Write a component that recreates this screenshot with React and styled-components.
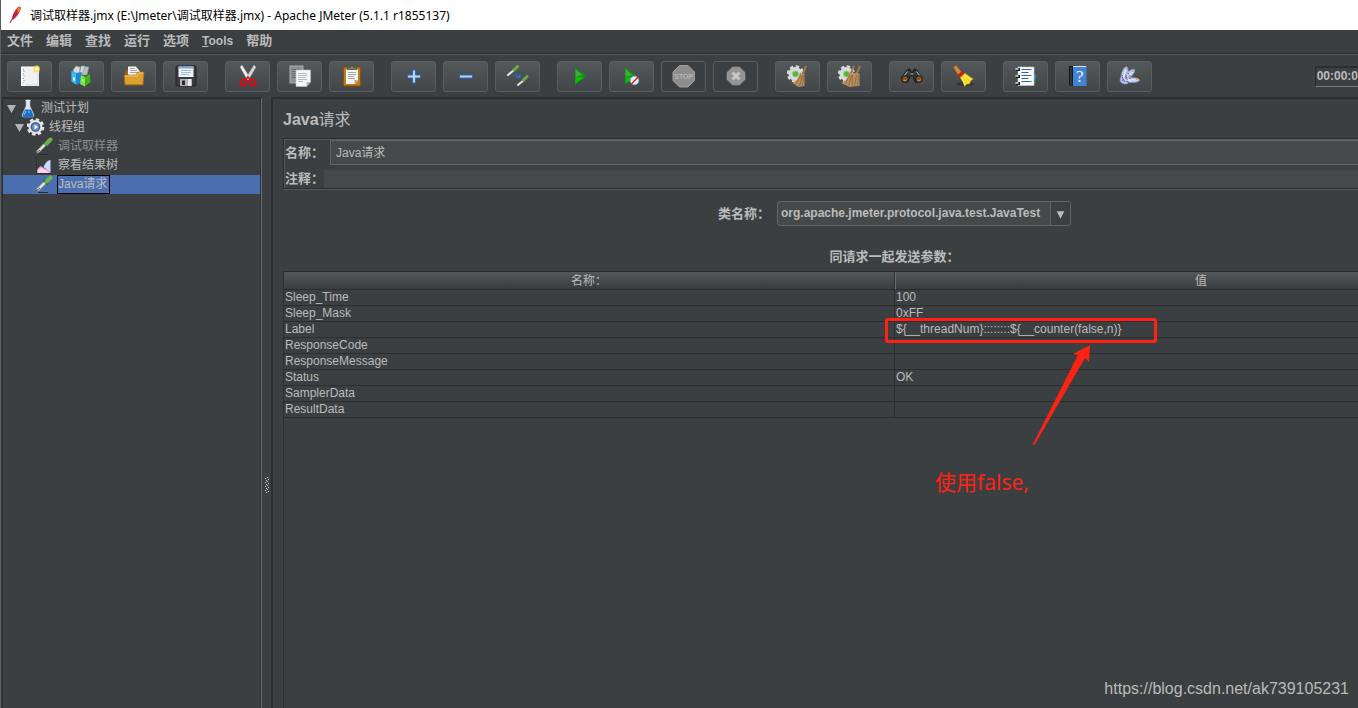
import React from 'react'
import styled, { createGlobalStyle, css } from 'styled-components'

const GlobalStyle = createGlobalStyle`
  * {
    box-sizing: border-box;
  }
  body {
    margin: 0;
    overflow: hidden;
    background: #3c3f41;
  }
  button, input, select {
    font: inherit;
    color: inherit;
    margin: 0;
  }
`

const Window = styled.div`
  position: relative;
  display: flex;
  flex-direction: column;
  height: 100vh;
  overflow: hidden;
  border-left: 1px solid #5a5d5f;
  background: #3c3f41;
  color: #bbbbbb;
  font-family: 'Liberation Sans', 'Noto Sans CJK SC', sans-serif;
  font-size: 12px;
`
const TitleBar = styled.header`
  display: flex;
  align-items: center;
  gap: 7px;
  height: 30px;
  flex: none;
  padding-left: 7px;
  background: #ffffff;
  color: #000000;
  font-family: 'Noto Sans', 'Noto Sans CJK SC', sans-serif;
  white-space: nowrap;
`
const MenuBar = styled.nav`
  display: flex;
  align-items: center;
  gap: 13px;
  height: 24px;
  flex: none;
  padding: 0 6px 1px;
  border-bottom: 1px solid #2b2d2f;
`
const MenuItem = styled.button`
  padding: 0;
  border: 0;
  background: none;
  font-size: ${p => p.$latin ? '12px' : '13px'};
  line-height: 20px;
  font-weight: bold;
`
const ToolBar = styled.div`
  display: flex;
  align-items: center;
  gap: 17px;
  height: 43px;
  flex: none;
  padding-left: 6px;
  border-top: 1px solid #555859;
`
const ToolGroup = styled.div`
  display: flex;
  gap: 7px;
`
const ToolButton = styled.button`
  display: flex;
  align-items: center;
  justify-content: center;
  width: 45px;
  height: 31px;
  padding: 0;
  border: 1px solid #5a5e60;
  border-radius: 3px;
  background: linear-gradient(#53585a, #424648);
  &:disabled {
    background: none;
  }
`
const Timer = styled.output`
  margin-left: auto;
  height: 21px;
  padding: 0 0 0 1px;
  border-style: solid;
  border-width: 2px 0 1px 1px;
  border-color: #2b2d2f #2b2d2f #7a7e80;
  font-weight: bold;
  line-height: 17px;
`
const Body = styled.div`
  display: flex;
  flex: 1;
  min-height: 0;
  padding-left: 1px;
`
const Tree = styled.aside`
  flex: none;
  width: 260px;
  border-top: 2px solid #2b2d2f;
  border-left: 1px solid #2b2d2f;
  border-right: 1px solid #6b6e70;
  box-shadow: inset -1px 0 0 #2b2d2f;
  padding-right: 1px;
`
const TreeRow = styled.div`
  display: flex;
  align-items: center;
  gap: 3px;
  height: 19px;
  padding-left: ${p => p.$indent}px;
  color: ${p => p.$dim ? '#8c8e8f' : '#bbbbbb'};
  background: ${p => p.$selected ? '#4b6eaf' : 'none'};
  white-space: nowrap;
  span {
    padding: 0 2px 0 0;
    border: 1px solid ${p => p.$selected ? '#000000' : 'transparent'};
    line-height: 17px;
  }
`
const NodeText = styled.span`
  height: 19px;
`
const Toggle = styled.svg`
  width: 9px;
  height: 8px;
`
const Splitter = styled.div`
  flex: none;
  width: 9px;
  padding: 380px 0 0 2px;
`
const Main = styled.main`
  display: flex;
  flex-direction: column;
  flex: 1;
  min-width: 0;
  overflow: hidden;
  padding: 9px 0 0 10px;
  border-top: 2px solid #2b2d2f;
  border-left: 2px solid #2b2d2f;
`
// the scrolled pane is wider than the part of it that shows
const Pane = styled.div`
  display: flex;
  flex-direction: column;
  flex: 1;
  width: calc(100% + 148px);
`
const Heading = styled.h1`
  margin: 0 0 6px;
  font-size: 16px;
  line-height: 24px;
  font-weight: normal;
  b {
    font-weight: bold;
  }
`
const Fields = styled.div`
  display: flex;
  flex-direction: column;
  gap: 5px;
  padding: 1px 0 0 1px;
  border: 1px solid #2b2d2f;
  box-shadow: 1px 1px 0 #555859, inset 1px 1px 0 #555859;
`
const Field = styled.div`
  display: flex;
  align-items: center;
`
const Label = styled.label`
  font-size: 13px;
  line-height: 18px;
  font-weight: bold;
`
const TextInput = styled.input`
  flex: 1;
  min-width: 0;
  outline: 0;
  background: #45494a;
  ${p => p.$plain ? css`
    height: 18px;
    border: 0;
  ` : css`
    height: 25px;
    margin-left: 6px;
    padding: 0 5px 3px;
    border: 1px solid #646464;
  `}
`
const ClassRow = styled.div`
  display: flex;
  align-items: center;
  justify-content: center;
  gap: 7px;
  margin-top: 12px;
`
const Combo = styled.div`
  display: flex;
  width: 294px;
  height: 25px;
  border: 1px solid #646464;
  border-radius: 3px;
  background: #45494a;
  overflow: hidden;
  svg {
    flex: none;
    width: 20px;
    height: 23px;
    border-left: 1px solid #646464;
    background: #3c3f41;
  }
`
const Select = styled.select`
  flex: 1;
  min-width: 0;
  padding: 0 0 1px 3px;
  border: 0;
  outline: 0;
  appearance: none;
  background: none;
  font-weight: bold;
`
const TableTitle = styled.h2`
  margin: 21px 0 4px;
  font-size: 13px;
  line-height: 20px;
  text-align: center;
`
const TableBox = styled.div`
  flex: 1;
  border-top: 1px solid #2b2d2f;
  border-left: 1px solid #2b2d2f;
`
const Table = styled.table`
  width: 100%;
  table-layout: fixed;
  border-spacing: 0;
  th, td {
    height: 16px;
    padding: 0 1px;
    border-bottom: 1px solid #2b2d2f;
    line-height: 15px;
    text-align: left;
    white-space: nowrap;
  }
  th {
    height: 18px;
    padding-top: 2px;
    background: linear-gradient(#53585a, #393c3e);
    font-weight: normal;
    text-align: center;
  }
  th:first-child, td:first-child {
    border-right: 1px solid #2b2d2f;
  }
  th + th {
    border-left: 1px solid #6b6e70;
  }
`
const ValueCell = styled.td`
  position: relative;
  z-index: ${p => p.$marked ? 1 : 0};
`
const Mark = styled.div`
  position: absolute;
  left: -10px;
  top: -4px;
  width: 272px;
  height: 25px;
  border: 3px solid #ff2213;
  border-radius: 3px;
`
const Arrow = styled.svg`
  position: absolute;
  left: 136px;
  top: 22px;
  width: 62px;
  height: 104px;
`
const Note = styled.div`
  position: absolute;
  left: 40px;
  top: 145px;
  color: #ff2213;
  font-family: 'Noto Sans', 'Noto Sans CJK SC', sans-serif;
  font-size: 21px;
  line-height: 30px;
`
const Watermark = styled.div`
  position: absolute;
  right: 9px;
  bottom: 9px;
  color: #b9bbbb;
  font-size: 16px;
  line-height: 20px;
`

const icons = {
  new: <>
    <rect x="3.5" y="2" width="17" height="18.5" fill="#f1f1f1" stroke="#fff" />
    <path d="M5.5 4v14M5.5 6.5h1M5.5 11h1M5.5 15.5h1" stroke="#999" strokeDasharray="1 3.5" />
    <path d="M8 20h12V8" fill="none" stroke="#d4d4d4" />
    <circle cx="18.5" cy="4" r="3.4" fill="#f2df52" opacity=".8" />
    <circle cx="18.5" cy="4" r="1.5" fill="#fffbd0" />
  </>,
  templates: <>
    <path d="M3 5l3-4 4 1v7l-6 1zM11 1h4l-1 8h-5z" fill="#d6dadc" stroke="#858b8e" strokeWidth=".6" />
    <path d="M15 1.500l4 .5-2 8h-5z" fill="#b9bec1" stroke="#858b8e" strokeWidth=".6" />
    <path d="M1.500 6l5 2 5-1v11l-5 1.500-5-3z" fill="#1c87d6" />
    <path d="M1.500 6l4.500 2v11.500l-4.500-3z" fill="#40bbf2" />
    <path d="M11 10l4 2 5-3 .5 8-6 4.500-4-2.500z" fill="#40b518" />
    <path d="M11 10l4 2v9.500l-5-2.500z" fill="#7be24a" />
    <path d="M3 12l2 1v3l-2-1zM12 14l1.500 1v2l-1.500-1z" fill="#e9fbff" />
  </>,
  open: <>
    <path d="M3 7l2-2h5l1 2 10-1v12H3z" fill="#9a6509" />
    <path d="M6 1.500h8l4 5V14H6z" fill="#f7f7f7" />
    <path d="M8 3.500h5M8 5.500h7M8 7.500h8" stroke="#a4a4a4" />
    <path d="M2 10h12l2-3h6l-1 13H3z" fill="#dba02f" stroke="#a26b0b" strokeWidth=".7" />
    <path d="M3 11h12l1.500-3H21" fill="none" stroke="#f3c874" />
    <path d="M3 19.500h18" stroke="#b57a12" />
  </>,
  save: <>
    <rect x="2" y="1" width="20" height="20" rx="1.500" fill="#3b3b3e" stroke="#202022" />
    <rect x="4.500" y="1.500" width="15" height="10.500" fill="#eef3f9" />
    <rect x="4.500" y="1.500" width="15" height="2" fill="#7ca5d7" />
    <path d="M7 5.500h10M7 7.500h10M7 9.500h8" stroke="#9ebbd9" />
    <rect x="6" y="14" width="12" height="7" fill="#b2b4b5" />
    <rect x="8" y="15.500" width="3" height="4.500" fill="#28292b" />
    <path d="M15.500 14v7" stroke="#e9e9e9" strokeWidth="3" />
  </>,
  cut: <>
    <path d="M4 2l2-2L13.500 12l-2 3z" fill="#f2f2f2" stroke="#999" strokeWidth=".5" />
    <path d="M20 2l-2-2L10.500 12l2 3z" fill="#d8dadb" stroke="#999" strokeWidth=".5" />
    <ellipse cx="7.500" cy="17.500" rx="2.700" ry="3.400" transform="rotate(32 7.500 17.500)" fill="none" stroke="#d70d13" strokeWidth="2.200" />
    <ellipse cx="16.500" cy="17.500" rx="2.700" ry="3.400" transform="rotate(-32 16.500 17.500)" fill="none" stroke="#d70d13" strokeWidth="2.200" />
    <path d="M10 14l2-2 2 2" fill="none" stroke="#d70d13" strokeWidth="1.500" />
  </>,
  copy: <>
    <rect x="2" y="1" width="13" height="17" fill="#8d9091" stroke="#a8abac" />
    <path d="M4 4.500h8M4 6.500h8M4 8.500h8M4 10.500h4M4 12.500h4" stroke="#686b6d" />
    <path d="M8 5h14.500v12l-4 4.500H8z" fill="#f4f4f4" stroke="#c2c2c2" strokeWidth=".6" />
    <path d="M10 8.500h9M10 10.500h9M10 12.500h8M10 14.500h9M10 16.500h5" stroke="#a9abad" strokeWidth=".8" />
    <path d="M22.500 17h-4v4.500z" fill="#b5b8ba" />
  </>,
  paste: <>
    <rect x="3.500" y="2" width="17" height="19" rx="1" fill="#c17a19" stroke="#88500a" />
    <path d="M6 4.500h12v11L15 19H6z" fill="#f5f5f5" />
    <path d="M8 7.500h8M8 9.500h8M8 11.500h6M8 13.500h7" stroke="#a8a8a8" />
    <path d="M18 15h-3.500v4z" fill="#a8a8a8" />
    <path d="M7.500 4.500V2.500h2.500L11 .5h2l1 2h2.500v2z" fill="#777b70" stroke="#3f423c" strokeWidth=".6" />
  </>,
  plus: <path d="M10.500 5h3v5h5v3h-5v5h-3v-5h-5v-3h5z" fill="#b7d2f3" stroke="#2f69b5" />,
  minus: <rect x="5.500" y="10" width="13" height="3" fill="#b7d2f3" stroke="#2f69b5" />,
  toggle: <>
    <path d="M2 10l6.500-5.500" stroke="#eceeea" strokeWidth="2" strokeLinecap="round" />
    <path d="M8 5l3.500-3.500" stroke="#6da84b" strokeWidth="3" strokeLinecap="round" />
    <path d="M12 20l6-5" stroke="#e1e4de" strokeWidth="2" strokeLinecap="round" />
    <path d="M17.500 15l3.500-3.500" stroke="#6da84b" strokeWidth="3" strokeLinecap="round" />
    <path d="M8.500 8l3 3" stroke="#1873ee" strokeWidth="1.500" strokeDasharray="1.500 1" />
    <path d="M14.500 8.500v4.500H10z" fill="#1873ee" />
  </>,
  play: <>
    <path d="M7 2l12 9L7 20z" fill="#17891a" />
    <path d="M7.500 4l7 6-7 2z" fill="#55b64a" opacity=".7" />
    <path d="M7.500 12.500L16 12l-8.500 6.500z" fill="#04c404" />
  </>,
  playNoTimers: <>
    <path d="M5 2l12 9L5 20z" fill="#17891a" />
    <path d="M5.500 4l7 6-7 2z" fill="#55b64a" opacity=".7" />
    <path d="M5.500 12.500L13 12l-7.500 6.500z" fill="#04c404" />
    <circle cx="14.500" cy="15.500" r="4.300" fill="#e7f0f8" stroke="#7aa8d3" />
    <path d="M11 19.500l7.500-8" stroke="#e21616" strokeWidth="1.300" />
  </>,
  stop: <>
    <path d="M7.500.5h8.500l6.500 6.500v8.500L16 22H7.500L1 15.500V7z" fill="#8d8d8d" stroke="#a0a0a0" />
    <text x="11.700" y="14" textAnchor="middle" fontSize="7" fontWeight="bold" fill="#b5b5b5">STOP</text>
  </>,
  shutdown: <>
    <path d="M8.500 2h7L21 7.500v7L15.500 20h-7L3 14.500v-7z" fill="#949494" stroke="#a0a0a0" strokeWidth=".5" />
    <path d="M8.500 7.500l7 7M15.500 7.500l-7 7" stroke="#c9c9c9" strokeWidth="2.800" />
  </>,
  clear: <>
    <circle cx="9.500" cy="9" r="7" fill="#d9dbda" />
    <circle cx="9.500" cy="9" r="7.500" fill="none" stroke="#d9dbda" strokeWidth="2.400" strokeDasharray="3.400 2.490" />
    <circle cx="9.500" cy="9" r="3" fill="#52b927" stroke="#a5bb9d" />
    <path d="M19 .5l2 .5-3 8-2-1z" fill="#a07544" />
    <path d="M14 7.500l4.500 1.500v12l-6 1-6-4c4-2 6-5 7.500-10.500z" fill="#b98f62" />
    <path d="M15 10l-5 9M16.500 10l-3 11M17.500 10l-1 11" stroke="#886036" strokeWidth=".7" />
  </>,
  clearAll: <>
    <circle cx="8.500" cy="9" r="7" fill="#d9dbda" />
    <circle cx="8.500" cy="9" r="7.500" fill="none" stroke="#d9dbda" strokeWidth="2.400" strokeDasharray="3.400 2.490" />
    <circle cx="8.500" cy="9" r="3" fill="#52b927" stroke="#a5bb9d" />
    <path d="M15 .5l2 .5-3 8-2-1zM21 .5l2 .5-3 8-2-1z" fill="#a07544" />
    <path d="M11 7.500l4 1.500 3-1.500 3.500 1.500v12l-6 .5-4 .5-8.500-4c5-2 7-5 8-10.500z" fill="#b98f62" />
    <path d="M11.500 10l-4 9M13.500 10l-3 11M14.500 10l-.5 11M18.500 10l-2 11M20.500 10l-1 11" stroke="#886036" strokeWidth=".7" />
  </>,
  search: <>
    <path d="M7 5l3-1 1 3h2l1-3 3 1 5 8-3 4h-4l-2-6h-3l-2 6H4l-3-4z" fill="#33383a" stroke="#16191a" />
    <path d="M7.500 6.500l-4 5M16.500 6.500l4 5M10.500 9h3" stroke="#aab2b5" strokeWidth="1.200" />
    <circle cx="5" cy="14" r="3.300" fill="#935218" stroke="#17191a" />
    <circle cx="19" cy="14" r="3.300" fill="#935218" stroke="#17191a" />
    <path d="M3.500 15.500q1.500 1 3-.5M17.500 15.500q1.500 1 3-.5" fill="none" stroke="#e38b3e" />
  </>,
  broom: <>
    <ellipse cx="13" cy="19" rx="9" ry="2" fill="#34373a" />
    <path d="M1.500 3q0-3 3-2.500L9.500 7 6 10z" fill="#c98b43" stroke="#80501b" strokeWidth=".6" />
    <path d="M5.500 10.500L10 6l3 2.500L8 13z" fill="#c71c18" />
    <path d="M8 12.500l5-4.500q5 4 8.500 6-3 1-4 5-2-1-5 2.500Q11 16 8 12.500z" fill="#f1d61e" stroke="#b18b0a" strokeWidth=".6" />
    <path d="M10 13l3 7M12 11l5 7.500M13 10l6 5" stroke="#fff47c" />
  </>,
  functions: <>
    <path d="M18 9h4v5h-4z" fill="#2e77ca" />
    <path d="M18 14h4v5h-4z" fill="#18852a" />
    <path d="M4 2h16v18.500H4z" fill="#fafafa" stroke="#c8c8c8" strokeWidth=".6" />
    <path d="M7.500 4.500h10M7.500 7.500h7M7.500 10.500h10M7.500 13.500h7M7.500 16.500h10" stroke="#2e68b7" />
    <path d="M2 4.500h4M2 11.500h4M2 18.500h4" stroke="#131313" strokeWidth="3" />
    <path d="M1.500 4h3M1.500 11h3M1.500 18h3" stroke="#efefef" strokeWidth="1.500" />
  </>,
  help: <>
    <path d="M3.500 1h17v20h-17z" fill="#4183d7" />
    <path d="M3.500 1.500H20" stroke="#dce5ee" />
    <path d="M3 1h4v20l-4-.5z" fill="#161719" />
    <path d="M5 2v18" stroke="#4b4e53" />
    <text x="13.700" y="17" textAnchor="middle" fontFamily="Liberation Serif" fontSize="17" fill="#f4f8ff">?</text>
  </>,
  feather: <>
    <g fill="#b4c7ea" stroke="#86a2d6" strokeWidth=".6">
      <ellipse cx="6.500" cy="9" rx="3" ry="7.500" transform="rotate(16 6.500 9)" />
      <ellipse cx="10.500" cy="10" rx="2.800" ry="8" transform="rotate(48 10.500 10)" />
      <ellipse cx="13" cy="15" rx="2.600" ry="8.500" transform="rotate(91 13 15)" />
      <ellipse cx="7" cy="15" rx="5" ry="4" />
    </g>
    <path d="M5 14l3-10M6 14l9-7M8 15h11M5 10l2 1M9 14l4 3" stroke="#eff5fb" />
    <path d="M4 10l2 7M8 10l2 8M10 8l2 4M4 15l9 3" stroke="#4459ab" strokeDasharray="1 1" />
    <path d="M8.500 2.500v2M15.500 5.500l-1 1M18 13.500l2 1" stroke="#e8994e" strokeWidth="1.500" />
    <path d="M8 11v3M12 13v1M5 13v1" stroke="#c53553" />
  </>,
}

const nodeIcons = {
  plan: <>
    <path d="M7 1h4v6l4 9q0 2-1.500 2h-9Q3 18 3 16l4-9z" fill="#dce8f2" stroke="#a8b7c3" strokeWidth=".6" />
    <path d="M6 10.500h6l2.500 6-1 1.500H4.500l-1-1.500z" fill="#1c6fd0" />
    <path d="M7 12l-2 4M9 13h2" stroke="#8cc4fa" />
    <path d="M6.500 1.500h5" stroke="#fff" />
  </>,
  gear: <>
    <circle cx="8.500" cy="9" r="7" fill="#e2e4e5" />
    <circle cx="8.500" cy="9" r="7.500" fill="none" stroke="#e2e4e5" strokeWidth="2.600" strokeDasharray="3.400 2.490" />
    <circle cx="8.500" cy="9" r="4.200" fill="#638fd0" stroke="#405983" strokeWidth="1.300" />
    <path d="M7.500 6.500l3.500 2.500-3.500 2.500z" fill="#fff" />
  </>,
  pipette: <>
    <path d="M2 17.500h10" stroke="#2a2c2e" />
    <path d="M0 16l1-2.500 7-7 2 2-7 7z" fill="#e3e6e1" stroke="#858985" strokeWidth=".7" />
    <path d="M0 16l4-3" stroke="#555" />
    <path d="M7.500 5l4.500 4.500" stroke="#2f5c21" strokeWidth="1.800" />
    <path d="M10.500 6.500L14.500 2.500" stroke="#67b348" strokeWidth="4" strokeLinecap="round" />
  </>,
  results: <>
    <path d="M.5 1v16.500H16" fill="none" stroke="#202224" strokeDasharray="1 1" />
    <path d="M1.500 17v-4l3-3 5 3 5 1v3z" fill="#efa4d8" />
    <path d="M7.500 11q3-7 7-7V15l-3-1z" fill="#c2dcfa" />
    <path d="M1.500 14l4-2 4 2 4 3h-12z" fill="#fad2ee" />
  </>,
}

const toolGroups = [
  [['new', '新建'], ['templates', '模板'], ['open', '打开'], ['save', '保存']],
  [['cut', '剪切'], ['copy', '复制'], ['paste', '粘贴']],
  [['plus', '展开'], ['minus', '折叠'], ['toggle', '切换']],
  [['play', '启动'], ['playNoTimers', '不停顿开始'], ['stop', '停止', true], ['shutdown', '关闭', true]],
  [['clear', '清除'], ['clearAll', '清除全部']],
  [['search', '查找'], ['broom', '重置查找']],
  [['functions', '函数助手'], ['help', '帮助'], ['feather', '关于']],
]

const nodes = [
  { text: '测试计划', icon: 'plan', indent: 4, open: true },
  { text: '线程组', icon: 'gear', indent: 12, open: true },
  { text: '调试取样器', icon: 'pipette', indent: 33, dim: true },
  { text: '察看结果树', icon: 'results', indent: 33 },
  { text: 'Java请求', icon: 'pipette', indent: 33, selected: true },
]

const params = [
  ['Sleep_Time', '100'],
  ['Sleep_Mask', '0xFF'],
  ['Label', '${__threadNum}::::::::${__counter(false,n)}'],
  ['ResponseCode', ''],
  ['ResponseMessage', ''],
  ['Status', 'OK'],
  ['SamplerData', ''],
  ['ResultData', ''],
]

const grip = [0, 4, 8, 12].map(y => <path key={y} d={`M3 ${y}h1v1h-1zM1 ${y + 1}h1v1h-1zM4 ${y + 2}h1v1h-1zM2 ${y + 3}h1v1h-1z`} fill="#d0d0d0" />)

const App = () => {
  return <>
    <GlobalStyle />
    <Window>
      <TitleBar>
        <svg width="15" height="18" viewBox="0 0 15 18">
          <path d="M4 13Q5 6 10 1q3-1 3 1-2 7-8 12z" fill="#cf2038" />
          <path d="M9 3q2-3 4-1-1 3-3 5z" fill="#ed7c23" />
          <path d="M4 13l-2 4M5 12l1-4" stroke="#6b2070" />
        </svg>
        <span>调试取样器.jmx (E:\Jmeter\调试取样器.jmx) - Apache JMeter (5.1.1 r1855137)</span>
      </TitleBar>
      <MenuBar>
        {['文件', '编辑', '查找', '运行', '选项'].map(m => <MenuItem key={m}>{m}</MenuItem>)}
        <MenuItem $latin><u>T</u>ools</MenuItem>
        <MenuItem>帮助</MenuItem>
      </MenuBar>
      <ToolBar>
        {toolGroups.map((group, i) => <ToolGroup key={i}>
          {group.map(([name, label, disabled]) =>
            <ToolButton key={name} aria-label={label} disabled={disabled}>
              <svg width="23" height="23" viewBox="0 0 23 23" fill="none">{icons[name]}</svg>
            </ToolButton>
          )}
        </ToolGroup>)}
        <Timer>00:00:0</Timer>
      </ToolBar>
      <Body>
        <Tree>
          {nodes.map(n => <TreeRow key={n.text} $indent={n.indent} $dim={n.dim} $selected={n.selected}>
            {n.open && <Toggle viewBox="0 0 9 8"><path d="M0 0h9L4.500 8z" fill="#b4b4b4" /></Toggle>}
            <svg width="18" height="19" viewBox="0 0 18 19" fill="none">{nodeIcons[n.icon]}</svg>
            <NodeText>{n.text}</NodeText>
          </TreeRow>)}
        </Tree>
        <Splitter>
          <svg width="5" height="16" viewBox="0 0 5 16">{grip}</svg>
        </Splitter>
        <Main>
          <Pane>
            <Heading><b>Java</b>请求</Heading>
            <Fields>
              <Field>
                <Label htmlFor="name">名称：</Label>
                <TextInput id="name" defaultValue="Java请求" />
              </Field>
              <Field>
                <Label htmlFor="comment">注释：</Label>
                <TextInput id="comment" $plain />
              </Field>
            </Fields>
            <ClassRow>
              <Label htmlFor="classname">类名称：</Label>
              <Combo>
                <Select id="classname">
                  <option>org.apache.jmeter.protocol.java.test.JavaTest</option>
                </Select>
                <svg viewBox="0 0 20 23"><path d="M6 9h8l-4 8z" fill="#bbbbbb" /></svg>
              </Combo>
            </ClassRow>
            <TableTitle>同请求一起发送参数：</TableTitle>
            <TableBox>
              <Table>
                <thead>
                  <tr><th>名称：</th><th>值</th></tr>
                </thead>
                <tbody>
                  {params.map(([name, value]) => <tr key={name}>
                    <td>{name}</td>
                    <ValueCell $marked={name === 'Label'}>
                      {value}
                      {name === 'Label' && <>
                        <Mark />
                        <Arrow viewBox="0 0 62 104">
                          <path d="M59 1L42 10l5 1L2 100q0 2 2 0L54 14l4 4z" fill="#ff2213" />
                        </Arrow>
                        <Note>使用false,</Note>
                      </>}
                    </ValueCell>
                  </tr>)}
                </tbody>
              </Table>
            </TableBox>
          </Pane>
        </Main>
      </Body>
      <Watermark>https://blog.csdn.net/ak739105231</Watermark>
    </Window>
  </>
}

export default App
